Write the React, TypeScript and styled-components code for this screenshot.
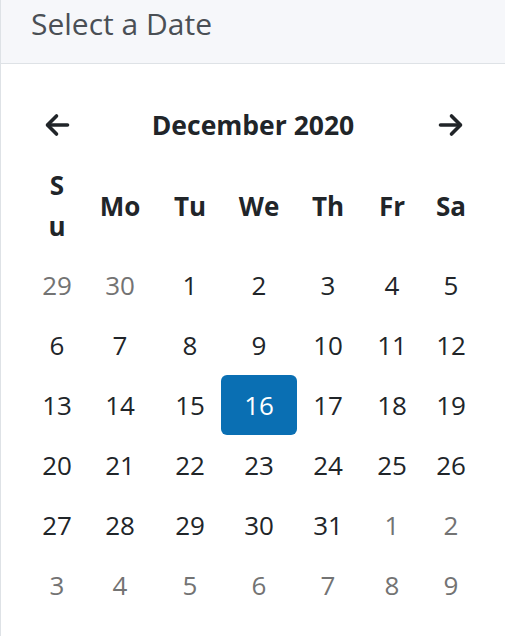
import React from "react";
import styled, { createGlobalStyle } from "styled-components";

const GlobalStyle = createGlobalStyle`
  body {
    margin: 0;
    font-family: "Open Sans", "Noto Sans", sans-serif;
    color: #212529;
    background: #fff;
  }
`;

const COLUMNS = "48px 78px 62px 76px 62px 66px 52px";

const weekDays = ["Su", "Mo", "Tu", "We", "Th", "Fr", "Sa"];

type Day = { n: number; muted?: boolean };

const weeks: Day[][] = [
  [{ n: 29, muted: true }, { n: 30, muted: true }, { n: 1 }, { n: 2 }, { n: 3 }, { n: 4 }, { n: 5 }],
  [{ n: 6 }, { n: 7 }, { n: 8 }, { n: 9 }, { n: 10 }, { n: 11 }, { n: 12 }],
  [{ n: 13 }, { n: 14 }, { n: 15 }, { n: 16 }, { n: 17 }, { n: 18 }, { n: 19 }],
  [{ n: 20 }, { n: 21 }, { n: 22 }, { n: 23 }, { n: 24 }, { n: 25 }, { n: 26 }],
  [{ n: 27 }, { n: 28 }, { n: 29 }, { n: 30 }, { n: 31 }, { n: 1, muted: true }, { n: 2, muted: true }],
  [
    { n: 3, muted: true },
    { n: 4, muted: true },
    { n: 5, muted: true },
    { n: 6, muted: true },
    { n: 7, muted: true },
    { n: 8, muted: true },
    { n: 9, muted: true },
  ],
];

function Arrow({ dir }: { dir: "left" | "right" }) {
  return (
    <svg width="26" height="26" viewBox="0 0 26 26" fill="none">
      <g
        stroke="#212529"
        strokeWidth="3.6"
        strokeLinecap="round"
        strokeLinejoin="round"
        transform={dir === "left" ? "matrix(-1 0 0 1 26 0)" : undefined}
      >
        <line x1="2.5" y1="13" x2="22" y2="13" />
        <polyline points="13.5,4 22.5,13 13.5,22" />
      </g>
    </svg>
  );
}

export default function App() {
  return (
    <>
      <GlobalStyle />
      <Card>
        <CardHeader>Select a Date</CardHeader>
        <CardBody>
          <MonthNav>
            <NavButton aria-label="Previous month">
              <Arrow dir="left" />
            </NavButton>
            <MonthTitle>December 2020</MonthTitle>
            <NavButton aria-label="Next month">
              <Arrow dir="right" />
            </NavButton>
          </MonthNav>
          <Grid>
            {weekDays.map((d) => (
              <DayHead key={d} $wrap={d === "Su"}>
                {d}
              </DayHead>
            ))}
            {weeks.map((week, wi) =>
              week.map((day, di) => (
                <DateCell
                  key={`${wi}-${di}`}
                  $muted={day.muted}
                  $selected={!day.muted && day.n === 16}
                >
                  {day.n}
                </DateCell>
              ))
            )}
          </Grid>
        </CardBody>
      </Card>
    </>
  );
}

const Card = styled.div`
  min-height: 100vh;
  border-left: 1px solid #dee2e6;
  box-sizing: border-box;
`;

const CardHeader = styled.div`
  height: 64px;
  display: flex;
  align-items: center;
  padding: 0 30px 16px;
  box-sizing: border-box;
  background: #f6f7fa;
  border-bottom: 1px solid #dee2e6;
  color: #4a4f55;
  font-size: 30px;
`;

const CardBody = styled.div`
  padding: 41px 0 0 32px;
`;

const MonthNav = styled.div`
  display: grid;
  grid-template-columns: ${COLUMNS};
  align-items: center;
  height: 40px;
  margin-bottom: 12px;
`;

const NavButton = styled.button`
  all: unset;
  display: flex;
  justify-content: center;
  align-items: center;
  cursor: pointer;
`;

const MonthTitle = styled.div`
  grid-column: 2 / 7;
  text-align: center;
  font-weight: 700;
  font-size: 26.5px;
  color: #212529;
`;

const Grid = styled.div`
  display: grid;
  grid-template-columns: ${COLUMNS};
`;

const DayHead = styled.div<{ $wrap?: boolean }>`
  display: flex;
  align-items: center;
  justify-content: center;
  text-align: center;
  padding: 8px ${(p) => (p.$wrap ? "14px" : "0")};
  font-weight: 700;
  font-size: 26px;
  line-height: 41px;
  color: #212529;
  word-break: ${(p) => (p.$wrap ? "break-all" : "normal")};
`;

const DateCell = styled.div<{ $muted?: boolean; $selected?: boolean }>`
  height: 60px;
  line-height: 60px;
  text-align: center;
  font-size: 26px;
  border-radius: 6px;
  color: ${(p) => (p.$selected ? "#fff" : p.$muted ? "#737373" : "#212529")};
  background: ${(p) => (p.$selected ? "#0a6fb3" : "transparent")};
`;
